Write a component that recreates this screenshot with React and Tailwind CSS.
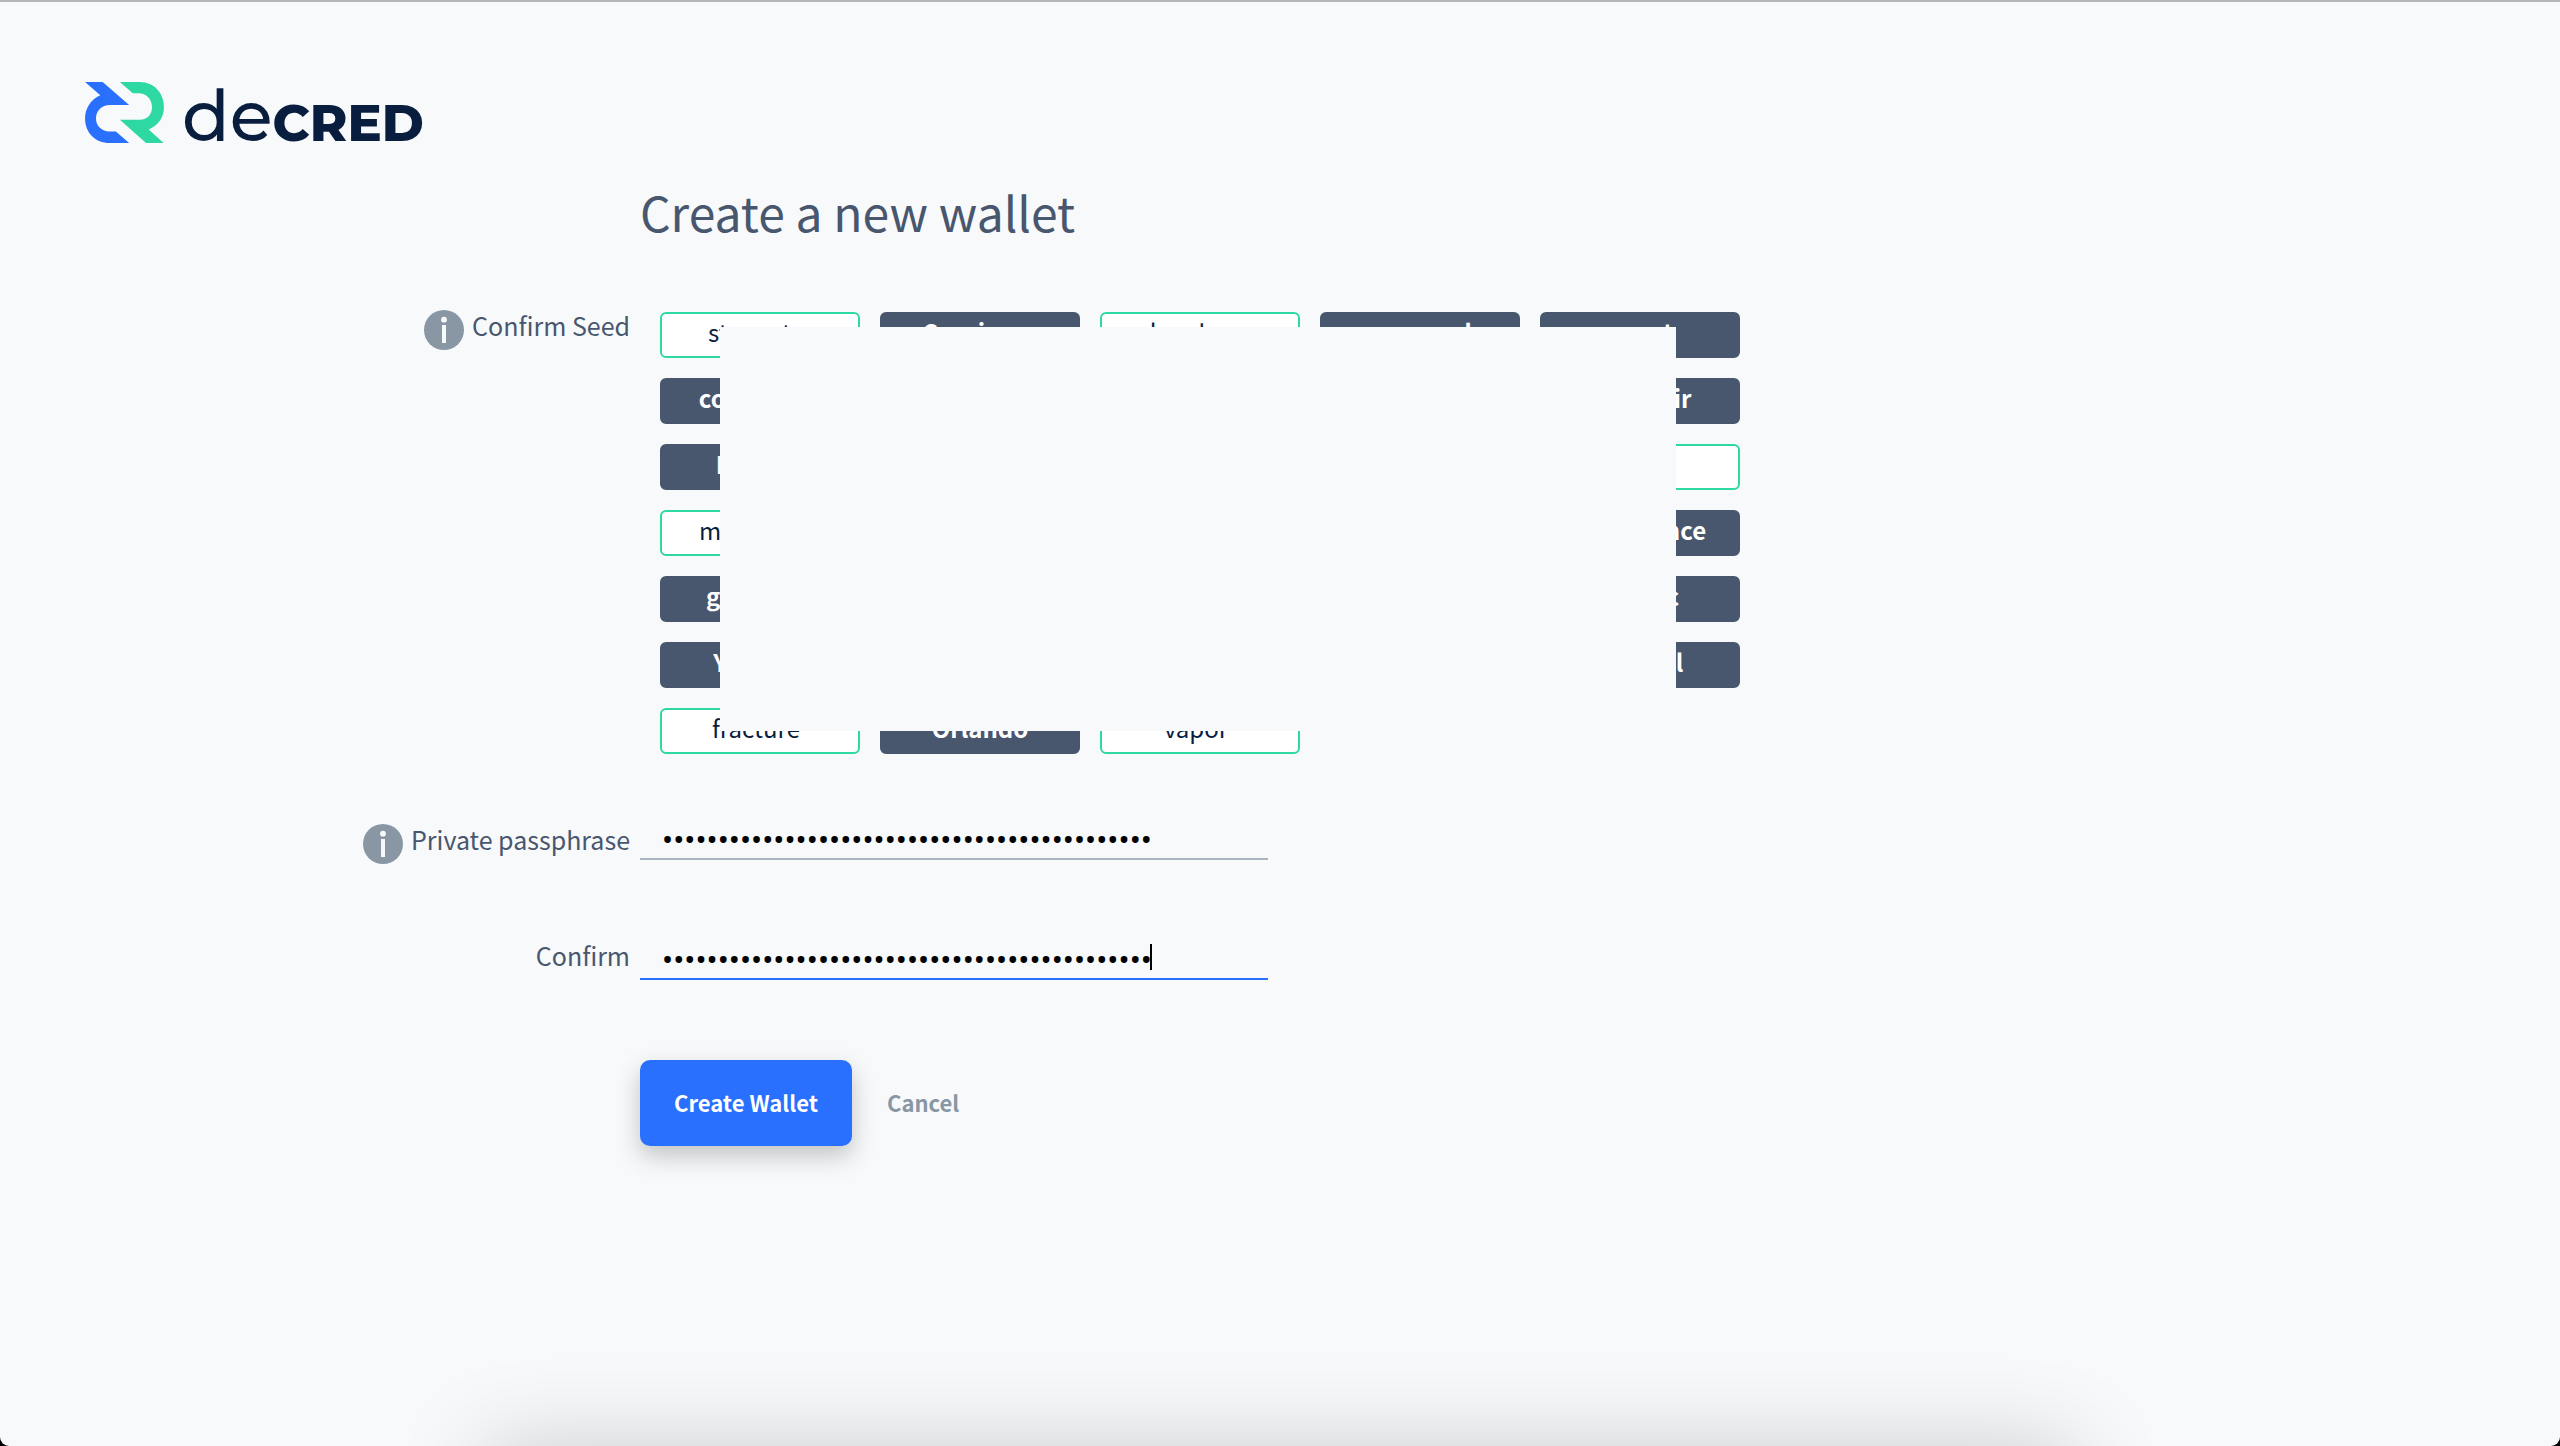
const seedWords = [
  ["stagnate", true], ["Capricorn"], ["slowdown", true], ["commando"], ["upset"],
  ["consensus"], [""], [""], [""], ["souvenir"],
  ["Dupont"], [""], [""], [""], ["solo", true],
  ["misnomer", true], [""], [""], [""], ["providence"],
  ["guidance"], [""], [""], [""], ["classic"],
  ["Yucatan"], [""], [""], [""], ["alcohol"],
  ["fracture", true], ["Orlando"], ["vapor", true],
];

function Logo() {
  return (
    <a href="#home" aria-label="Decred" className="flex items-end gap-[18px]">
      <svg viewBox="75 66 238 184" className="h-[61px] w-[79px]" aria-hidden="true">
        <path
          fill="#2970ff"
          d="M75 66H128L208 135H151C124 135 108 153 108 176C108 199 126 215 148 215H168L208 250H150C105 250 75 218 75 176C75 147 92 118 121 106Z"
        />
        <path
          fill="#2ed8a3"
          d="M180 66H240C284 66 313 100 313 142C313 172 295 198 267 209L312 250H259L180 180H240C263 180 277 163 277 142C277 118 260 100 236 100H219Z"
        />
      </svg>
      <span className="flex h-[61px] items-baseline font-['Montserrat',Lato,sans-serif] leading-[68px] text-[#091e3f]">
        <span className="text-[70px] font-medium">de</span>
        <span className="text-[51px] font-extrabold">CRED</span>
      </span>
    </a>
  );
}

function InfoButton({ label }) {
  return (
    <button type="button" aria-label={label} className="size-10">
      <svg viewBox="0 0 40 40" className="size-10" aria-hidden="true">
        <circle cx="20" cy="20" r="20" fill="#8997a5" />
        <circle cx="20" cy="9.7" r="2.9" fill="#f7f9fa" />
        <rect x="18" y="15" width="4" height="18" fill="#f7f9fa" />
      </svg>
    </button>
  );
}

function SeedWord({ word, filled }) {
  const look = filled
    ? "border-[#2ed8a3] bg-white pr-2 text-[#091e3f]"
    : "border-[#48566e] bg-[#48566e] font-bold text-white";
  return (
    <li className={`h-[46px] rounded-md border-2 pb-1.5 text-center text-[24px] leading-[36px] ${look}`}>
      {word}
    </li>
  );
}

export default function App() {
  return (
    <div className="bg-black">
      <main className="relative min-h-screen overflow-hidden rounded-b-[9px] border-t-2 border-[#b4b6b8] bg-[#f7f9fa] font-['Noto_Sans_CJK_SC',sans-serif] text-[#48566e]">
        <header className="px-[85px] pt-20">
          <Logo />
        </header>

        <form onSubmit={(e) => e.preventDefault()}>
          <h1 className="mt-9 pl-[25%] text-[48px] leading-16">Create a new wallet</h1>

          <section className="mt-[67px] flex" aria-labelledby="seed-label">
            <div className="flex w-1/4 items-start justify-end gap-2 pr-[10px]">
              <InfoButton label="About the seed" />
              <span id="seed-label" className="text-[25px] leading-[30px]">Confirm Seed</span>
            </div>
            <div className="relative pt-[2px] pl-5">
              <ul className="grid grid-cols-[repeat(5,200px)] gap-5">
                {seedWords.map(([word, filled], i) => (
                  <SeedWord key={i} word={word} filled={filled} />
                ))}
              </ul>
              <div className="absolute top-[17px] left-20 h-[404px] w-[956px] bg-[#f7f9fa]" />
            </div>
          </section>

          <div className="mt-[70px] flex">
            <div className="flex w-1/4 items-start justify-end gap-2 pr-[10px]">
              <InfoButton label="About the private passphrase" />
              <label htmlFor="passphrase" className="text-[25px] leading-[30px]">Private passphrase</label>
            </div>
            <input
              id="passphrase"
              type="password"
              defaultValue="correcthorsebatterystaplecorrecthorsebattery"
              className="h-9 w-[628px] border-b-2 border-[#a9b4bf] pb-0.5 pl-[22px] font-[Roboto,sans-serif] text-[33px] leading-8 text-black outline-none"
            />
          </div>

          <div className="mt-[76px] flex">
            <div className="flex w-1/4 justify-end pr-[10px]">
              <label htmlFor="confirm" className="text-[25px] leading-[30px]">Confirm</label>
            </div>
            <div className="relative">
              <input
                id="confirm"
                type="password"
                defaultValue="correcthorsebatterystaplecorrecthorsebattery"
                className="h-10 w-[628px] border-b-2 border-[#2970ff] pt-1 pb-0.5 pl-[22px] font-[Roboto,sans-serif] text-[33px] leading-8 text-black caret-transparent outline-none"
              />
              <span className="absolute top-1 left-[510px] h-[26px] w-[2px] bg-black" />
            </div>
          </div>

          <div className="mt-20 flex items-center gap-[35px] pl-[25%] font-bold">
            <button
              type="submit"
              className="h-[86px] w-[212px] rounded-[10px] bg-[#2970ff] pb-0.5 text-[22px] text-white shadow-[0_10px_24px_rgba(0,0,0,0.22)]"
            >
              Create Wallet
            </button>
            <button type="button" className="pb-0.5 text-[22px] text-[#8997a5]">Cancel</button>
          </div>
        </form>

        <div className="absolute inset-x-[485px] top-full h-40 shadow-[0_0_90px_rgba(0,0,0,0.18)]" />
      </main>
    </div>
  );
}
